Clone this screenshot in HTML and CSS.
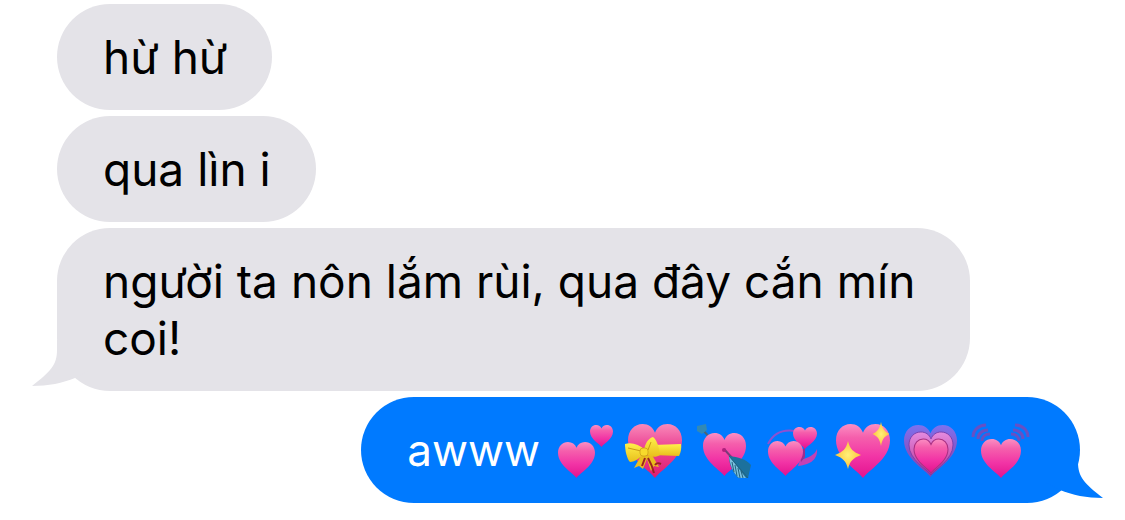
FILE: index.html
```html
<!DOCTYPE html>
<html lang="vi">
<head>
    <meta charset="UTF-8">
    <meta name="viewport" content="width=device-width, initial-scale=1.0">
    <title>Messages</title>
    <link rel="stylesheet" href="styles.css">
</head>
<body>
    <!-- shared shapes and gradients for the emoji -->
    <svg class="defs" aria-hidden="true">
        <defs>
            <linearGradient id="pink" x1="0" y1="0" x2="0" y2="1">
                <stop offset="0" stop-color="#fb8fc3"/>
                <stop offset="0.25" stop-color="#f55fac"/>
                <stop offset="0.6" stop-color="#f235a6"/>
                <stop offset="1" stop-color="#e3128f"/>
            </linearGradient>
            <linearGradient id="red" x1="0" y1="0" x2="0" y2="1">
                <stop offset="0" stop-color="#f98ab9"/>
                <stop offset="0.35" stop-color="#ee4f9b"/>
                <stop offset="1" stop-color="#df1a6e"/>
            </linearGradient>
            <linearGradient id="purple" x1="0" y1="0" x2="0" y2="1">
                <stop offset="0" stop-color="#7d72ee"/>
                <stop offset="0.5" stop-color="#8554c8"/>
                <stop offset="1" stop-color="#8b3fae"/>
            </linearGradient>
            <linearGradient id="rose" x1="0" y1="0" x2="0" y2="1">
                <stop offset="0" stop-color="#e48ce0"/>
                <stop offset="1" stop-color="#b82f92"/>
            </linearGradient>
            <linearGradient id="gold" x1="0" y1="0" x2="0" y2="1">
                <stop offset="0" stop-color="#fff04a"/>
                <stop offset="1" stop-color="#e8bf1c"/>
            </linearGradient>
            <radialGradient id="star">
                <stop offset="0" stop-color="#fff07a"/>
                <stop offset="1" stop-color="#fcc53a"/>
            </radialGradient>
            <path id="heart" d="M50 100C42 87 0 65 0 30C0 12 12 0 27 0C38 0 46 6 50 16C54 6 62 0 73 0C88 0 100 12 100 30C100 65 58 87 50 100Z"/>
            <path id="sparkle" d="M0-14C2-6 5-3 13 0C5 3 2 6 0 14C-2 6-5 3-13 0C-5-3-2-6 0-14Z"/>
        </defs>
    </svg>

    <main class="chat">
        <div class="bubble received">hừ hừ</div>
        <div class="bubble received">qua lìn i</div>
        <div class="bubble received">
            người ta nôn lắm rùi, qua đây cắn mín coi!
            <svg class="tail" viewBox="0 0 60 51" aria-hidden="true"><path d="M27 0V10C27 25 21 31 2 46C18 46 33 43 45 38L60 30V0Z"/></svg>
        </div>
        <div class="bubble sent">
            <span>awww</span>
            <span class="emojis">
                <svg viewBox="0 0 69 57" role="img" aria-label="two hearts">
                    <use href="#heart" transform="translate(6 20) scale(.37 .36)" fill="url(#pink)"/>
                    <use href="#heart" transform="translate(38 3) scale(.23 .22)" fill="url(#pink)"/>
                </svg>
                <svg viewBox="0 0 69 57" role="img" aria-label="heart with ribbon">
                    <use href="#heart" transform="translate(7 2) scale(.54)" fill="url(#red)"/>
                    <path d="M32 23L60 22Q61 28 58 34L32 33Z" fill="url(#gold)"/>
                    <path d="M21 32L13 46L18 44L22 47L27 34ZM25 34L30 49L33 44L38 45L31 33Z" fill="#e9bd1e"/>
                    <path d="M24 36L21 44M27 36C31 43 32 47 33 51M34 43C36 40 38 41 40 42" fill="none" stroke="#9c2222" stroke-width="2"/>
                    <path d="M24 28C18 22 10 20 4 22C4 29 6 37 9 40C14 40 20 35 24 31Z" fill="url(#gold)"/>
                    <path d="M23 28C24 21 28 16 32 15C36 18 38 25 39 33C35 36 29 35 24 32Z" fill="url(#gold)"/>
                    <path d="M7 26L20 29M30 20L27 28" stroke="#c99a16" stroke-width="1"/>
                    <rect x="19" y="26" width="8" height="8" rx="3" fill="#f7da2c" stroke="#c99a16" stroke-width=".7"/>
                </svg>
                <svg viewBox="0 0 69 57" role="img" aria-label="heart with arrow">
                    <path d="M12 7L21 17" stroke="#4d6474" stroke-width="2"/>
                    <path d="M7 4L16 2L17 8L12 12L7 9Z" fill="#3289b5"/>
                    <use href="#heart" transform="translate(13 11) scale(.43)" fill="url(#pink)"/>
                    <path d="M34 27L44 38" stroke="#793b79" stroke-width="2"/>
                    <circle cx="34" cy="28" r="2" fill="#b0207c"/>
                    <path d="M39 34C48 35 56 37 61 43L58 56L48 56C42 49 39 42 39 34Z" fill="#1c719d"/>
                    <path d="M39 34C40 43 43 51 49 56L56 56Z" fill="#79bfdf"/>
                    <path d="M42 40L44 50M45 43L47 54M48 46L50 56M51 49L53 56M39 34L58 56" stroke="#22627f" stroke-width="1"/>
                </svg>
                <svg viewBox="0 0 69 57" role="img" aria-label="revolving hearts">
                    <path d="M9 22C14 12 23 7 36 9" fill="none" stroke="#8e50d0" stroke-width="2"/>
                    <path d="M58 27C56 33 49 36 41 38L39 44C49 43 59 39 58 27Z" fill="#c342b5"/>
                    <path d="M40 29L46 26L46 35L42 40Z" fill="#9c2d91"/>
                    <use href="#heart" transform="translate(34 5) scale(.24 .22)" fill="url(#pink)"/>
                    <use href="#heart" transform="translate(9 19) scale(.35)" fill="url(#pink)"/>
                </svg>
                <svg viewBox="0 0 69 57" role="img" aria-label="sparkling heart">
                    <use href="#heart" transform="translate(8 2) scale(.54)" fill="url(#pink)"/>
                    <use href="#sparkle" transform="translate(20 33)" fill="url(#star)"/>
                    <use href="#sparkle" transform="translate(53 12) scale(.65 .85)" fill="url(#star)"/>
                </svg>
                <svg viewBox="0 0 69 57" role="img" aria-label="growing heart">
                    <use href="#heart" transform="translate(7 3) scale(.53 .52)" fill="url(#purple)"/>
                    <use href="#heart" transform="translate(12 10) scale(.44 .43)" fill="url(#rose)" stroke="#763ba9" stroke-width="2"/>
                    <use href="#heart" transform="translate(17 17) scale(.34 .34)" fill="url(#pink)" stroke="#a82f83" stroke-width="3"/>
                </svg>
                <svg viewBox="0 0 69 57" role="img" aria-label="beating heart">
                    <g fill="none" stroke="#6750c4" stroke-width="3">
                        <path d="M7 15C7 8 13 3 20 3M12 17C12 12 16 8 22 8M16 19C16 15 19 12 24 12"/>
                        <path d="M62 15C62 8 56 3 49 3M57 17C57 12 53 8 47 8M53 19C53 15 50 12 45 12"/>
                    </g>
                    <use href="#heart" transform="translate(15 17) scale(.4 .39)" fill="url(#pink)"/>
                </svg>
            </span>
            <svg class="tail" viewBox="0 0 60 51" aria-hidden="true"><path d="M27 0V10C27 25 21 31 2 46C18 46 33 43 45 38L60 30V0Z"/></svg>
        </div>
    </main>
</body>
</html>
```

FILE: styles.css
```css
body {
    margin: 0;
    background-color: #fff;
    font-family: Inter, "Liberation Sans", sans-serif;
    font-size: 46px;
    line-height: 57px;
    color: #000;
}
.defs {
    position: absolute;
    width: 0;
    height: 0;
}
.chat {
    display: flex;
    flex-direction: column;
    gap: 6px;
    padding: 4px 45px 16px 57px;
}
.bubble {
    position: relative;
    box-sizing: border-box;
    max-width: calc(100% - 110px);
    padding: 25px 45px 24px 46px;
    border-radius: 53px;
}
.received {
    align-self: flex-start;
    background-color: #e4e3e8;
}
.sent {
    display: flex;
    align-items: center;
    align-self: flex-end;
    gap: 12px;
    background-color: #007aff;
    font-size: 44px;
    color: #fff;
}
.emojis {
    display: flex;
}
.emojis svg {
    width: 69px;
    height: 57px;
}
.tail {
    position: absolute;
    bottom: 0;
    left: -27px;
    width: 60px;
    height: 51px;
    fill: #e4e3e8;
}
.sent .tail {
    left: auto;
    right: -25px;
    transform: scaleX(-1);
    fill: #007aff;
}
```
